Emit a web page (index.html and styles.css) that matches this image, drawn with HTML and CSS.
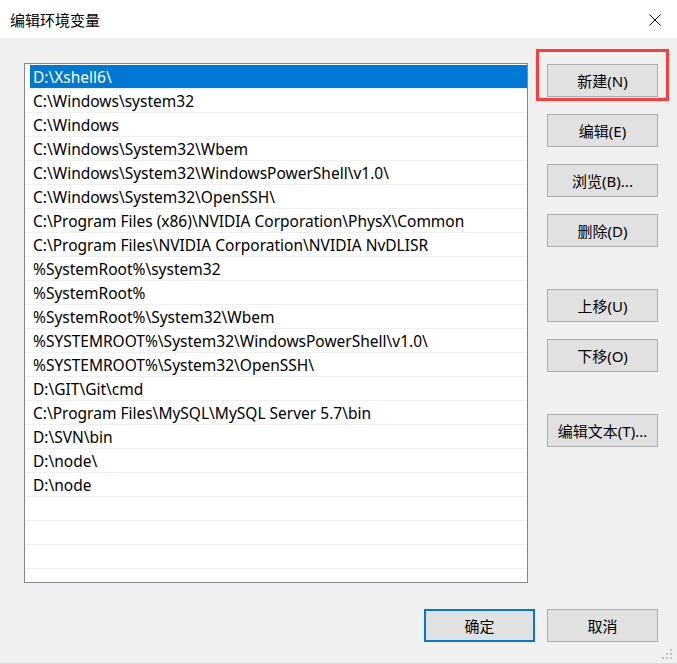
FILE: index.html
```html
<!DOCTYPE html>
<html lang="zh-CN">
<head>
<meta charset="utf-8">
<title>编辑环境变量</title>
<link rel="stylesheet" href="styles.css">
</head>
<body>
<div class="window">
  <div class="titlebar">
    <span class="title">编辑环境变量</span>
    <svg class="close" width="12" height="12" viewBox="0 0 12 12"><path d="M0.5 0.5 L11.5 11.5 M11.5 0.5 L0.5 11.5" stroke="#000" stroke-width="1" fill="none"/></svg>
  </div>
  <div class="content">
    <div class="main">
      <div class="list">
        <div class="row"><span class="cell selected">D:\Xshell6\</span></div>
        <div class="row"><span class="cell">C:\Windows\system32</span></div>
        <div class="row"><span class="cell">C:\Windows</span></div>
        <div class="row"><span class="cell">C:\Windows\System32\Wbem</span></div>
        <div class="row"><span class="cell">C:\Windows\System32\WindowsPowerShell\v1.0\</span></div>
        <div class="row"><span class="cell">C:\Windows\System32\OpenSSH\</span></div>
        <div class="row"><span class="cell">C:\Program Files (x86)\NVIDIA Corporation\PhysX\Common</span></div>
        <div class="row"><span class="cell">C:\Program Files\NVIDIA Corporation\NVIDIA NvDLISR</span></div>
        <div class="row"><span class="cell">%SystemRoot%\system32</span></div>
        <div class="row"><span class="cell">%SystemRoot%</span></div>
        <div class="row"><span class="cell">%SystemRoot%\System32\Wbem</span></div>
        <div class="row"><span class="cell">%SYSTEMROOT%\System32\WindowsPowerShell\v1.0\</span></div>
        <div class="row"><span class="cell">%SYSTEMROOT%\System32\OpenSSH\</span></div>
        <div class="row"><span class="cell">D:\GIT\Git\cmd</span></div>
        <div class="row"><span class="cell">C:\Program Files\MySQL\MySQL Server 5.7\bin</span></div>
        <div class="row"><span class="cell">D:\SVN\bin</span></div>
        <div class="row"><span class="cell">D:\node\</span></div>
        <div class="row"><span class="cell">D:\node</span></div>
        <div class="row"><span class="cell"></span></div>
        <div class="row"><span class="cell"></span></div>
        <div class="row"><span class="cell"></span></div>
        <div class="row"><span class="cell"></span></div>
        <div class="row last"><span class="cell"></span></div>
      </div>
      <div class="side">
        <div class="group">
          <button class="btn">新建(N)</button>
          <button class="btn">编辑(E)</button>
          <button class="btn">浏览(B)...</button>
          <button class="btn">删除(D)</button>
        </div>
        <div class="group">
          <button class="btn">上移(U)</button>
          <button class="btn">下移(O)</button>
        </div>
        <div class="group">
          <button class="btn">编辑文本(T)...</button>
        </div>
      </div>
    </div>
    <div class="footer">
      <button class="btn default">确定</button>
      <button class="btn">取消</button>
    </div>
  </div>
  <div class="highlight"></div>
  <svg class="grip" width="12" height="12" viewBox="0 0 12 12">
    <rect x="8" y="0" width="2" height="2" fill="#bfbfbf"/>
    <rect x="4" y="4" width="2" height="2" fill="#bfbfbf"/>
    <rect x="8" y="4" width="2" height="2" fill="#bfbfbf"/>
    <rect x="0" y="8" width="2" height="2" fill="#bfbfbf"/>
    <rect x="4" y="8" width="2" height="2" fill="#bfbfbf"/>
    <rect x="8" y="8" width="2" height="2" fill="#bfbfbf"/>
  </svg>
</div>
</body>
</html>
```
FILE: styles.css
```css
* { box-sizing: border-box; }
html, body {
  margin: 0;
  padding: 0;
  background: #f0f0f0;
}
body {
  font-family: "Noto Sans", "Noto Sans CJK SC", sans-serif;
  font-size: 15px;
  color: #000;
}
.window {
  position: relative;
  width: 677px;
  height: 664px;
  background: #f0f0f0;
  border-bottom: 1px solid #dadada;
  overflow: hidden;
}
.titlebar {
  height: 38px;
  background: #fff;
  display: flex;
  align-items: center;
  justify-content: space-between;
  padding: 0 16px 0 10px;
}
.title {
  font-size: 15px;
  line-height: 20px;
  padding-top: 1px;
}
.close {
  display: block;
  margin-top: 1px;
}
.content {
  display: flex;
  flex-direction: column;
}
.main {
  display: flex;
  padding: 25px 0 0 24px;
}
.list {
  width: 504px;
  height: 520px;
  border: 1px solid #828790;
  background: #fff;
  padding: 1px 0 0 1px;
  overflow: hidden;
  display: flex;
  flex-direction: column;
  font-size: 15.5px;
}
.row {
  flex: none;
  height: 24px;
  border-bottom: 1px solid #f0f0f0;
  display: flex;
}
.cell {
  flex: 1;
  margin-left: 4px;
  padding: 1px 0 0 3px;
  height: 23px;
  line-height: 23px;
  white-space: nowrap;
}
.cell.selected {
  background: #0078d7;
  color: #fff;
}
.side {
  margin-left: 19px;
  padding-top: 1px;
  display: flex;
  flex-direction: column;
  gap: 42px;
}
.group {
  display: flex;
  flex-direction: column;
  gap: 17px;
}
.btn {
  width: 111px;
  height: 33px;
  background: #e1e1e1;
  border: 1px solid #adadad;
  font-family: "Noto Sans", "Noto Sans CJK SC", sans-serif;
  font-size: 15px;
  color: #000;
  padding: 0;
  margin: 0;
  line-height: 20px;
}
.btn.default {
  border: 2px solid #0078d7;
}
.footer {
  display: flex;
  justify-content: flex-end;
  gap: 12px;
  margin-top: 26px;
  padding-right: 19px;
}
.highlight {
  position: absolute;
  left: 536px;
  top: 49px;
  width: 133px;
  height: 52px;
  border: 3px solid #ff3b3b;
  pointer-events: none;
}
.grip {
  position: absolute;
  right: 3px;
  bottom: 2px;
}
```
